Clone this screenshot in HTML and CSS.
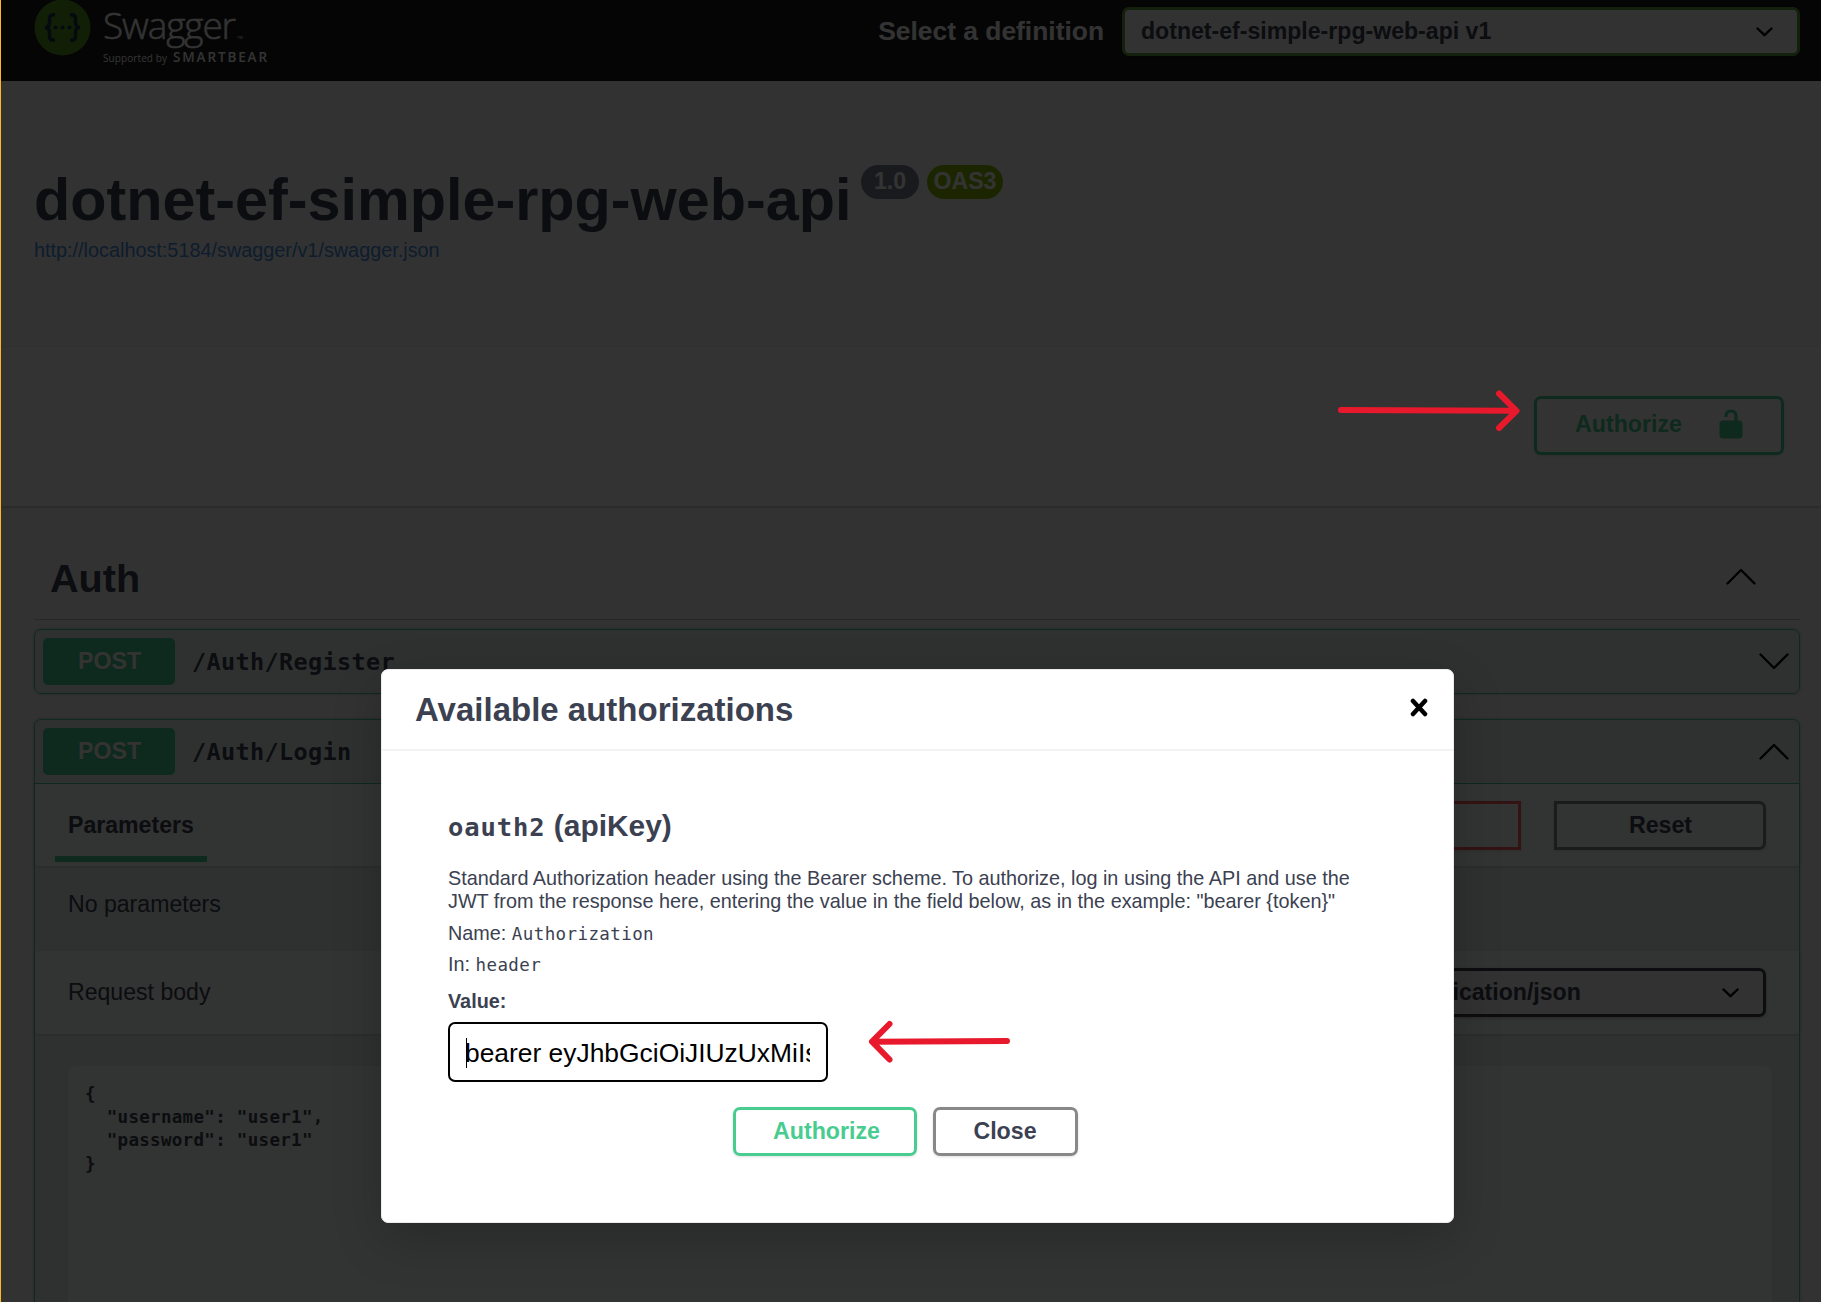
FILE: index.html
```html
<!DOCTYPE html>
<html lang="en">
<head>
<meta charset="utf-8">
<title>Swagger UI</title>
<link rel="stylesheet" href="styles.css">
</head>
<body>
<div class="page">
  <header class="topbar">
    <svg class="logo" width="236" height="81" viewBox="0 0 236 81">
      <circle cx="28.500" cy="27.500" r="28" fill="#85ea2d" fill-opacity=".62"/>
      <g fill="none" stroke="#173647" stroke-width="3.600">
        <path d="M21 14.800h-1.500q-4 0-4 4v3.700q0 4.800-4.500 5q4.500.200 4.500 5v3.700q0 4 4 4h1.500"/>
        <path d="M36 14.800h1.500q4 0 4 4v3.700q0 4.800 4.500 5q-4.500.200-4.500 5v3.700q0 4-4 4h-1.500"/>
      </g>
      <g fill="#173647"><circle cx="21.500" cy="27.500" r="2.100"/><circle cx="28.500" cy="27.500" r="2.100"/><circle cx="35.500" cy="27.500" r="2.100"/></g>
      <text class="logo-name" x="69" y="39" textLength="133">Swagger</text>
      <text class="logo-tm" x="203" y="39">TM</text>
      <text class="logo-by" x="69" y="62" textLength="64">Supported by</text>
      <text class="logo-brand" x="139" y="62" textLength="94">SMARTBEAR</text>
    </svg>
    <div class="definition">
      <span class="definition-label">Select a definition</span>
      <div class="select select-green">
        <span>dotnet-ef-simple-rpg-web-api v1</span>
        <svg width="17" height="10" viewBox="0 0 17 10"><path d="M1.500 1.500 8.500 8.200 15.500 1.500"/></svg>
      </div>
    </div>
  </header>

  <section class="info">
    <div class="title-row">
      <h1>dotnet-ef-simple-rpg-web-api</h1>
      <span class="badge version">1.0</span>
      <span class="badge oas">OAS3</span>
    </div>
    <a class="spec-link">http://localhost:5184/swagger/v1/swagger.json</a>
  </section>

  <section class="schemes">
    <div class="btn btn-auth-top">
      <span>Authorize</span>
      <svg width="24" height="30" viewBox="0 0 24 30"><rect x=".500" y="11.500" width="23" height="18" rx="3.500" fill="#49cc90"/><path d="M7 8V7q0-5 5-5t5 5v6" fill="none" stroke="#49cc90" stroke-width="3.200"/></svg>
    </div>
  </section>

  <main class="operations">
    <div class="tag">
      <h2>Auth</h2>
      <svg class="chevron" width="30" height="17" viewBox="0 0 30 17"><path d="M1.500 15.500 15 2 28.500 15.500"/></svg>
    </div>

    <article class="block">
      <div class="summary">
        <span class="method">POST</span>
        <span class="path">/Auth/Register</span>
        <svg class="chevron" width="30" height="17" viewBox="0 0 30 17"><path d="M1.500 1.500 15 15 28.500 1.500"/></svg>
      </div>
    </article>

    <article class="block block-open">
      <div class="summary">
        <span class="method">POST</span>
        <span class="path">/Auth/Login</span>
        <svg class="chevron" width="30" height="17" viewBox="0 0 30 17"><path d="M1.500 15.500 15 2 28.500 15.500"/></svg>
      </div>
      <div class="section-header parameters">
        <span class="tab">Parameters</span>
        <div class="actions">
          <div class="btn cancel">Cancel</div>
          <div class="btn reset">Reset</div>
        </div>
      </div>
      <p class="empty">No parameters</p>
      <div class="section-header request">
        <span>Request body</span>
        <div class="select select-type">
          <span>application/json</span>
          <svg width="17" height="10" viewBox="0 0 17 10"><path d="M1.500 1.500 8.500 8.200 15.500 1.500"/></svg>
        </div>
      </div>
      <pre class="body-param">{
  "username": "user1",
  "password": "user1"
}</pre>
    </article>
  </main>

  <div class="backdrop"></div>

  <div class="modal">
    <div class="modal-header">
      <h3>Available authorizations</h3>
      <svg width="18" height="19" viewBox="0 0 18 19"><path d="M3 3 15 16M15 3 3 16"/></svg>
    </div>
    <div class="modal-body">
      <h4><code>oauth2</code> (apiKey)</h4>
      <p class="description">Standard Authorization header using the Bearer scheme. To authorize, log in using the API and use the JWT from the response here, entering the value in the field below, as in the example: "bearer {token}"</p>
      <p class="name">Name: <code>Authorization</code></p>
      <p class="in">In: <code>header</code></p>
      <p class="value">Value:</p>
      <div class="field"><span>bearer eyJhbGciOiJIUzUxMiIs</span></div>
      <div class="modal-actions">
        <div class="btn authorize">Authorize</div>
        <div class="btn close">Close</div>
      </div>
    </div>
  </div>

  <svg class="arrow arrow-right" width="190" height="50" viewBox="0 0 190 50"><path d="M11 25 184 25.700M169 8.500 186.500 25.800 169 43"/></svg>
  <svg class="arrow arrow-left" width="150" height="50" viewBox="0 0 150 50"><path d="M141 25 7 25.700M23.500 8 6 25.700 23.500 43.500"/></svg>
  <div class="edge"></div>
</div>
</body>
</html>
```
FILE: styles.css
```css
* { box-sizing: border-box; }
body { margin: 0; font-family: "Liberation Sans", Arial, sans-serif; color: #3b4151; }
h1, h2, h3, h4, p, pre { margin: 0; }
svg { display: block; flex: none; }
code { font-family: "DejaVu Sans Mono", monospace; }
.page { position: relative; width: 1821px; height: 1302px; overflow: hidden; background: #fafafa; }

.topbar { display: flex; justify-content: space-between; height: 81px; padding: 0 21px 0 34px; background: #1b1b1b; }
.logo text { fill: #fff; font-family: "Open Sans", sans-serif; }
.logo .logo-name { font-size: 37px; font-weight: 300; stroke: #fff; stroke-width: .5px; }
.logo .logo-tm { font-size: 4px; }
.logo .logo-by { font-size: 10px; }
.logo .logo-brand { font-size: 13.5px; font-weight: 600; }
.definition { display: flex; align-items: center; gap: 18px; height: 49px; margin-top: 7px; }
.definition-label { color: #fff; font-size: 26.400px; font-weight: 700; white-space: nowrap; }
.select { display: flex; align-items: center; justify-content: space-between; height: 49px; border: 3px solid #41444e; border-radius: 7px; background: #f7f7f7; font-size: 23.100px; font-weight: 700; box-shadow: 0 1px 3px rgba(0, 0, 0, .25); }
.select svg path { fill: none; stroke: #000; stroke-width: 2.400; stroke-linecap: round; stroke-linejoin: round; }
.select-green { width: 678px; padding: 0 24px 0 16px; border-color: #62a03f; }

.info { height: 266px; padding: 87px 34px 0; }
.title-row { display: flex; align-items: flex-start; }
h1 { width: 818px; height: 60px; font-size: 59.340px; line-height: 63px; white-space: nowrap; }
.badge { height: 34px; margin-top: -3px; border-radius: 17px; color: #fff; font-size: 23.100px; font-weight: 700; line-height: 32px; text-align: center; }
.version { width: 58px; margin-left: 9px; background: #7d8492; }
.oas { width: 76px; margin-left: 8px; background: #89bf04; }
.spec-link { display: block; margin-top: 10px; color: #4990e2; font-size: 19.830px; line-height: 24px; }

.schemes { display: flex; justify-content: flex-end; height: 159px; padding: 49px 37px 0; background: #fff; box-shadow: 0 1px 3px rgba(0, 0, 0, .25); }
.btn { display: flex; align-items: center; justify-content: center; height: 49px; border: 3px solid #888; border-radius: 7px; font-size: 23.200px; font-weight: 700; box-shadow: 0 1px 3px rgba(0, 0, 0, .12); }
.btn-auth-top { justify-content: space-between; width: 250px; height: 59px; padding: 0 38px 3px; border-color: #49cc90; color: #49cc90; }

.operations { padding: 31px 21px 0 34px; }
.tag { display: flex; align-items: center; justify-content: space-between; height: 83px; padding: 0 44px 0 16px; border-bottom: 1px solid rgba(59, 65, 81, .3); }
.tag svg { margin-top: -3px; }
h2 { font-size: 39.600px; line-height: 46px; }
.chevron path { fill: none; stroke: #000; stroke-width: 2.400; stroke-linecap: round; stroke-linejoin: round; }
.block { height: 65px; margin-top: 9px; border: 1px solid #49cc90; border-radius: 7px; background: rgba(73, 204, 144, .1); box-shadow: 0 0 5px rgba(0, 0, 0, .19); }
.block-open { height: 700px; margin-top: 25px; }
.summary { display: flex; align-items: center; height: 63px; padding: 0 10px 0 8px; }
.block-open .summary { height: 64px; border-bottom: 1px solid #49cc90; }
.method { width: 132px; height: 47px; padding-left: 1px; border-radius: 5px; background: #49cc90; color: #fff; font-size: 23.200px; font-weight: 700; line-height: 46px; text-align: center; text-shadow: 0 1px 0 rgba(0, 0, 0, .1); }
.path { flex: 1; padding-left: 17px; font-family: "DejaVu Sans Mono", monospace; font-size: 23.500px; font-weight: 700; letter-spacing: .360px; }
.section-header { display: flex; align-items: center; justify-content: space-between; height: 82px; padding: 0 33px; background: rgba(255, 255, 255, .8); box-shadow: 0 1px 3px rgba(0, 0, 0, .15); font-size: 23.100px; }
.parameters { padding-left: 20px; }
.tab { align-self: flex-end; width: 152px; height: 54px; margin-bottom: 4px; padding-left: 13px; border-bottom: 6px solid #49cc90; font-weight: 700; line-height: 35px; }
.actions { display: flex; gap: 33px; }
.cancel, .reset { width: 212px; border-radius: 0 7px 7px 0; }
.cancel { border-color: #ff6060; border-radius: 7px 0 0 7px; color: #ff6060; }
.reset { padding-left: 1px; }
.cancel, .reset { flex: none; }
.cancel { border-radius: 7px 0 0 7px; }
.empty { height: 85px; padding: 24px 33px; font-size: 23.100px; line-height: 28px; }
.request { height: 83px; }
.select-type { width: 380px; padding: 0 24px 0 16px; }
.body-param { height: 500px; margin: 32px 27px 0 33px; padding: 17px; border-radius: 7px; background: rgba(255, 255, 255, .8); font-family: "DejaVu Sans Mono", monospace; font-size: 17.500px; font-weight: 700; line-height: 23.200px; letter-spacing: .310px; }

.backdrop { position: absolute; inset: 0; background: rgba(0, 0, 0, .8); }
.modal { position: absolute; left: 381px; top: 669px; width: 1073px; height: 554px; border: 1px solid #ebebeb; border-radius: 7px; background: #fff; box-shadow: 0 17px 50px rgba(0, 0, 0, .2); }
.modal-header { display: flex; align-items: center; justify-content: space-between; height: 81px; padding: 0 25px 0 33px; border-bottom: 2px solid #f3f3f4; }
.modal-header svg { margin-top: -5px; }
.modal-header path { fill: none; stroke: #000; stroke-width: 4.500; stroke-linecap: round; }
h3 { font-size: 33px; line-height: 40px; }
.modal-body { padding: 58px 90px 0 66px; font-size: 19.820px; line-height: 23px; }
h4 { height: 34px; font-size: 29.900px; line-height: 34px; }
h4 code { font-size: 25.500px; letter-spacing: .900px; line-height: 1; }
.modal-body p code { font-size: 17.500px; letter-spacing: .400px; line-height: 1; }
.description { margin-top: 24px; }
.name { margin-top: 9px; }
.in { margin-top: 8px; }
.value { margin-top: 14px; font-weight: 700; }
.field { width: 380px; height: 60px; margin-top: 9px; padding: 14px 16px; border: 2px solid #000; border-radius: 7px; color: #000; font-size: 26.400px; line-height: 30px; }
.field span { display: block; overflow: hidden; border-left: 1px solid #000; text-indent: -2px; white-space: nowrap; }
.modal-actions { display: flex; justify-content: center; gap: 16px; margin-top: 25px; padding-right: 1px; }
.authorize { width: 184px; padding-left: 4px; border-color: #49cc90; color: #49cc90; }
.close { width: 145px; }

.arrow { position: absolute; }
.arrow path { fill: none; stroke: #e8192c; stroke-width: 6; stroke-linecap: round; stroke-linejoin: round; }
.arrow-right { left: 1330px; top: 385px; }
.arrow-left { left: 866px; top: 1016px; }
.edge { position: absolute; left: 0; top: 0; width: 1px; height: 100%; background: #ffb71b; }
```
